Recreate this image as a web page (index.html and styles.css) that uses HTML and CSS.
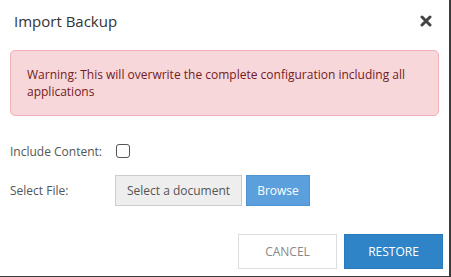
FILE: index.html
```html
<!DOCTYPE html>
<html lang="en">
<head>
  <meta charset="UTF-8">
  <title>Import Backup</title>
  <link rel="stylesheet" href="styles.css">
</head>
<body>
  <div class="modal">
    <div class="modal-header">
      <span class="modal-title">Import Backup</span>
      <span class="close">
        <svg width="12" height="12" viewBox="0 0 12 12"><path d="M2 2 L10 10 M10 2 L2 10" stroke="#444" stroke-width="3" stroke-linecap="round"/></svg>
      </span>
    </div>
    <div class="modal-body">
      <div class="alert">Warning: This will overwrite the complete configuration including all applications</div>
      <div class="form">
        <label class="row-label">Include Content:</label>
        <div class="row-field"><span class="checkbox"></span></div>
        <label class="row-label">Select File:</label>
        <div class="row-field file">
          <span class="file-name">Select a document</span>
          <span class="btn-browse">Browse</span>
        </div>
      </div>
    </div>
    <div class="modal-footer">
      <button class="btn btn-cancel">CANCEL</button>
      <button class="btn btn-restore">RESTORE</button>
    </div>
  </div>
</body>
</html>
```

FILE: styles.css
```css
body { margin:0; font-family: 'Open Sans', 'Noto Sans', sans-serif; color:#333; background:#fff; }
.modal {
  box-sizing:border-box; width:451px; height:277px;
  border-right:2px solid #3a3a3a; border-bottom:1px solid #3a3a3a;
  display:flex; flex-direction:column;
}
.modal-header {
  height:40px; box-sizing:border-box; padding:2px 17px 0 14px;
  display:flex; align-items:center; justify-content:space-between;
}
.modal-title { font-size:15px; color:#333; }
.close { display:flex; }
.modal-body { padding:10px 10px 0 10px; }
.alert {
  background:#f8d7da; border:1px solid #f1b0b7; border-radius:5px;
  color:#721c24; font-size:12px; line-height:17px; padding:15px 16px;
}
.form {
  display:grid; grid-template-columns:105px auto; row-gap:11px;
  margin-top:22px; font-size:12px; color:#555;
}
.row-label { display:flex; align-items:center; height:26px; }
.form .row-label:nth-of-type(2) { height:31px; }
.row-field { display:flex; align-items:center; }
.checkbox {
  width:12px; height:12px; border:1px solid #555; border-radius:3px; margin-left:1px;
}
.file { height:31px; gap:4px; }
.file-name {
  width:125px; height:29px; border:1px solid #ccc; background:#eee;
  display:flex; align-items:center; justify-content:center; font-size:12px; color:#555;
}
.btn-browse {
  width:62px; height:29px; border:1px solid #4f93d0; background:#5ba0dc; color:#fff;
  display:flex; align-items:center; justify-content:center; font-size:12px;
}
.modal-footer {
  margin-top:auto; padding:0 6px 7px 0;
  display:flex; justify-content:flex-end; gap:7px;
}
.btn {
  width:99px; height:35px; font-family:inherit; font-size:12px; border-radius:0; cursor:pointer;
}
.btn-cancel { background:#fff; border:1px solid #ddd; color:#888; }
.btn-restore { background:#2f84c7; border:1px solid #2a7abb; color:#fff; }
```
